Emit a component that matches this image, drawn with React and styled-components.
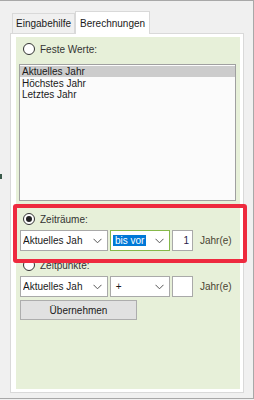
import React from 'react';
import styled, { createGlobalStyle } from 'styled-components';

const GlobalStyle = createGlobalStyle`
  html, body {
    margin: 0;
    padding: 0;
    background: #f0f0f0;
  }
  body {
    font-family: "Liberation Sans", Arial, sans-serif;
    font-size: 10px;
    color: #1a1a1a;
  }
`;

const Window = styled.div`
  position: relative;
  box-sizing: border-box;
  width: 254px;
  height: 399px;
  border-top: 1px solid #a8a8a8;
  border-right: 1px solid #a8a8a8;
  border-bottom: 1px solid #a8a8a8;
  background: #f0f0f0;
  padding: 9px 10px 0 10px;
`;

const TabStrip = styled.div`
  display: flex;
  align-items: flex-end;
  height: 23px;
  padding-left: 2px;
`;

const Tab = styled.div`
  box-sizing: border-box;
  height: ${p => (p.$active ? '23px' : '20px')};
  padding: 0 ${p => (p.$active ? 4 : 3)}px;
  display: flex;
  align-items: center;
  border: 1px solid #d9d9d9;
  border-bottom: none;
  background: ${p => (p.$active ? '#ffffff' : '#f0f0f0')};
  margin-bottom: ${p => (p.$active ? '-1px' : '0')};
  position: relative;
  z-index: ${p => (p.$active ? 2 : 1)};
  color: #1a1a1a;
  white-space: nowrap;
`;

const Panel = styled.div`
  box-sizing: border-box;
  width: 234px;
  height: 360px;
  border: 1px solid #d9d9d9;
  background: #ffffff;
  padding: 3px 3px 3px 5px;
`;

const Green = styled.div`
  box-sizing: border-box;
  height: 100%;
  background: #e7f0d9;
  padding: 5px 4px 0 3px;
  display: flex;
  flex-direction: column;
`;

const RadioRow = styled.label`
  display: flex;
  align-items: center;
  gap: 5px;
  height: 14px;
  margin-top: ${p => p.$top}px;
  padding-left: 4px;
  color: #333;
`;

const Circle = styled.span`
  box-sizing: border-box;
  width: 12px;
  height: 12px;
  border-radius: 50%;
  border: 1px solid #333;
  background: #fff;
  display: grid;
  place-items: center;

  &::after {
    content: '';
    width: 6px;
    height: 6px;
    border-radius: 50%;
    background: ${p => (p.$checked ? '#222' : 'transparent')};
  }
`;

const ListBox = styled.div`
  box-sizing: border-box;
  margin-top: 8px;
  height: 137px;
  border: 1px solid #a0a0a0;
  background: #fbfbfb;
  padding-top: 1px;
`;

const ListItem = styled.div`
  height: 11px;
  line-height: 11px;
  padding-left: 2px;
  background: ${p => (p.$selected ? '#cccccc' : 'transparent')};
  margin-bottom: ${p => (p.$selected ? '1px' : '0')};
`;

const FieldRow = styled.div`
  display: flex;
  align-items: center;
  margin-top: ${p => p.$top}px;
  height: 21px;
  padding-left: 1px;
`;

const Combo = styled.div`
  box-sizing: border-box;
  width: ${p => p.$w}px;
  height: 21px;
  margin-right: 2px;
  background: #fff;
  border: 1px solid ${p => (p.$focus ? '#86b84a' : '#a9a9a9')};
  display: flex;
  align-items: center;
  padding: 0 0 0 2px;
`;

const ComboText = styled.span`
  flex: 1;
  overflow: hidden;
  white-space: nowrap;
  color: #1a1a1a;
`;

const Highlight = styled.span`
  background: #0078d7;
  color: #fff;
  padding: 1px 2px;
`;

const Chevron = styled.svg`
  width: 9px;
  height: 6px;
  margin: 0 5px 0 4px;
  flex: none;
`;

const NumBox = styled.div`
  box-sizing: border-box;
  width: 21px;
  height: 21px;
  background: #fff;
  border: 1px solid #a9a9a9;
  display: flex;
  align-items: center;
  justify-content: flex-end;
  padding-right: 3px;
  color: #2a1a4a;
`;

const Unit = styled.span`
  margin-left: 7px;
  color: #4a4432;
`;

const Button = styled.div`
  box-sizing: border-box;
  margin-top: 3px;
  margin-left: 1px;
  width: 117px;
  height: 20px;
  border: 1px solid #adadad;
  background: #e1e1e1;
  display: flex;
  align-items: center;
  justify-content: center;
  color: #1a1a1a;
`;

const Marker = styled.div`
  position: absolute;
  left: 13px;
  top: 203px;
  width: 234px;
  height: 59px;
  box-sizing: border-box;
  border: 4px solid #ee2a3f;
  border-radius: 3px;
  pointer-events: none;
`;

const EdgeMark = styled.div`
  position: absolute;
  left: 0;
  top: 173px;
  width: 2px;
  height: 5px;
  background: #3a5a4a;
`;

const ChevronIcon = () => (
  <Chevron viewBox="0 0 9 6">
    <path d="M0.5 0.8 L4.5 4.8 L8.5 0.8" fill="none" stroke="#555" strokeWidth="1" />
  </Chevron>
);

export default function App() {
  return (
    <>
      <GlobalStyle />
      <Window>
        <TabStrip>
          <Tab>Eingabehilfe</Tab>
          <Tab $active>Berechnungen</Tab>
        </TabStrip>
        <Panel>
          <Green>
            <RadioRow $top={0}>
              <Circle />
              Feste Werte:
            </RadioRow>
            <ListBox>
              <ListItem $selected>Aktuelles Jahr</ListItem>
              <ListItem>Höchstes Jahr</ListItem>
              <ListItem>Letztes Jahr</ListItem>
            </ListBox>
            <RadioRow $top={11}>
              <Circle $checked />
              Zeiträume:
            </RadioRow>
            <FieldRow $top={4}>
              <Combo $w={88}>
                <ComboText>Aktuelles Jah</ComboText>
                <ChevronIcon />
              </Combo>
              <Combo $w={60} $focus>
                <ComboText><Highlight>bis vor</Highlight></ComboText>
                <ChevronIcon />
              </Combo>
              <NumBox>1</NumBox>
              <Unit>Jahr(e)</Unit>
            </FieldRow>
            <RadioRow $top={7}>
              <Circle />
              Zeitpunkte:
            </RadioRow>
            <FieldRow $top={4}>
              <Combo $w={88}>
                <ComboText>Aktuelles Jah</ComboText>
                <ChevronIcon />
              </Combo>
              <Combo $w={60}>
                <ComboText>&nbsp;+</ComboText>
                <ChevronIcon />
              </Combo>
              <NumBox />
              <Unit>Jahr(e)</Unit>
            </FieldRow>
            <Button>Übernehmen</Button>
          </Green>
        </Panel>
        <Marker />
        <EdgeMark />
      </Window>
    </>
  );
}
